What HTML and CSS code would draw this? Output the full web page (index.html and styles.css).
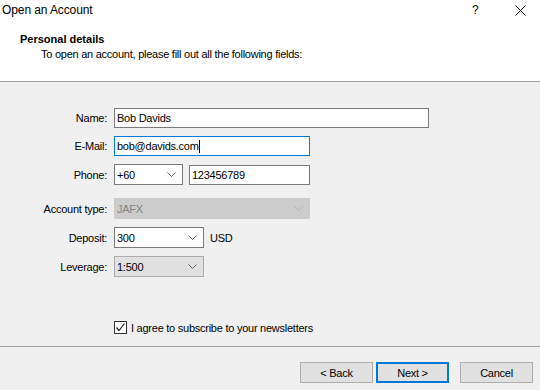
FILE: index.html
```html
<!doctype html>
<html lang="en">
  <head>
    <meta charset="UTF-8" />
    <meta name="viewport" content="width=device-width, initial-scale=1.0" />
    <title>Open an Account</title>
    <link rel="stylesheet" href="styles.css">
  </head>
  <body>
    <div class="dialog">
      <div class="header">
        <div class="titlebar">
          <span class="title">Open an Account</span>
          <span class="help">?</span>
          <span class="close">
            <svg width="11" height="11" viewBox="0 0 11 11">
              <path d="M0.5 0.5 L10.5 10.5 M10.5 0.5 L0.5 10.5" stroke="#000" stroke-width="1" fill="none" />
            </svg>
          </span>
        </div>
        <div class="intro">
          <h1>Personal details</h1>
          <p>To open an account, please fill out all the following fields:</p>
        </div>
      </div>

      <div class="body">
        <div class="form">
          <div class="row">
            <label>Name:</label>
            <div class="field name">Bob Davids</div>
          </div>
          <div class="row">
            <label>E-Mail:</label>
            <div class="field email focused">bob@davids.com<span class="caret"></span></div>
          </div>
          <div class="row">
            <label>Phone:</label>
            <div class="combo code">
              <span>+60</span>
              <svg class="chevron" width="9" height="5" viewBox="0 0 9 5"><path d="M0.5 0.5 L4.5 4.5 L8.5 0.5" stroke="#606060" fill="none" /></svg>
            </div>
            <div class="field phone">123456789</div>
          </div>
          <div class="row gap-big">
            <label>Account type:</label>
            <div class="combo disabled account">
              <span>JAFX</span>
              <svg class="chevron" width="9" height="5" viewBox="0 0 9 5"><path d="M0.5 0.5 L4.5 4.5 L8.5 0.5" stroke="#b4b4b4" fill="none" /></svg>
            </div>
          </div>
          <div class="row">
            <label>Deposit:</label>
            <div class="combo deposit">
              <span>300</span>
              <svg class="chevron" width="9" height="5" viewBox="0 0 9 5"><path d="M0.5 0.5 L4.5 4.5 L8.5 0.5" stroke="#606060" fill="none" /></svg>
            </div>
            <span class="unit">USD</span>
          </div>
          <div class="row">
            <label>Leverage:</label>
            <div class="combo list leverage">
              <span>1:500</span>
              <svg class="chevron" width="9" height="5" viewBox="0 0 9 5"><path d="M0.5 0.5 L4.5 4.5 L8.5 0.5" stroke="#606060" fill="none" /></svg>
            </div>
          </div>
        </div>

        <div class="agree">
          <span class="check">
            <svg width="11" height="11" viewBox="0 0 11 11"><path d="M1.5 5.5 L4 8.5 L9.5 1.5" stroke="#222" stroke-width="1.2" fill="none" /></svg>
          </span>
          <span>I agree to subscribe to your newsletters</span>
        </div>
      </div>

      <div class="footer">
        <button class="btn">&lt; Back</button>
        <button class="btn default">Next &gt;</button>
        <button class="btn cancel">Cancel</button>
      </div>
    </div>
  </body>
</html>
```

FILE: styles.css
```css
body {
  margin: 0;
  padding: 0;
  font-family: "Liberation Sans", Arial, sans-serif;
  font-size: 11px;
  letter-spacing: -0.25px;
  color: #000;
  background: #f0f0f0;
}
.dialog {
  width: 540px;
  height: 390px;
  overflow: hidden;
}
.header {
  height: 81px;
  background: #fff;
  border-bottom: 1px solid #a0a0a0;
}
.titlebar {
  display: flex;
  align-items: center;
  height: 20px;
}
.title {
  font-size: 12px;
  letter-spacing: -0.1px;
  padding-left: 2px;
  flex: 1;
}
.help {
  font-size: 12px;
  width: 12px;
  margin-right: 31px;
}
.close {
  display: flex;
  width: 11px;
  margin-right: 14px;
}
.intro {
  margin-top: 13px;
}
.intro h1 {
  margin: 0;
  padding-left: 20px;
  font-size: 11px;
  letter-spacing: 0;
  line-height: 13px;
  font-weight: bold;
}
.intro p {
  margin: 2px 0 0;
  padding-left: 41px;
  line-height: 13px;
}
.body {
  height: 265px;
  border-bottom: 1px solid #a0a0a0;
  padding-top: 26px;
  box-sizing: border-box;
}
.form {
  display: flex;
  flex-direction: column;
  gap: 8px;
}
.row {
  display: flex;
  align-items: center;
}
.row.gap-big {
  margin-top: 5px;
}
.row label {
  width: 107px;
  margin-right: 7px;
  text-align: right;
}
.field {
  height: 20px;
  box-sizing: border-box;
  border: 1px solid #7a7a7a;
  background: #fff;
  padding: 0 2px;
  display: flex;
  align-items: center;
}
.field.focused {
  border-color: #0078d7;
}
.caret {
  width: 1px;
  height: 13px;
  background: #000;
}
.name {
  width: 315px;
}
.email {
  width: 196px;
}
.phone {
  width: 121px;
  margin-left: 6px;
}
.combo {
  height: 21px;
  box-sizing: border-box;
  border: 1px solid #7a7a7a;
  background: #fff;
  padding: 0 6px 0 2px;
  display: flex;
  align-items: center;
  justify-content: space-between;
}
.combo.code {
  width: 69px;
}
.combo.account {
  width: 196px;
}
.combo.disabled {
  background: #cccccc;
  border-color: #cccccc;
  color: #838383;
}
.combo.deposit,
.combo.leverage {
  width: 90px;
}
.combo.list {
  background: #e1e1e1;
  border-color: #adadad;
}
.unit {
  margin-left: 6px;
}
.agree {
  display: flex;
  align-items: center;
  margin: 44px 0 0 114px;
  height: 13px;
}
.check {
  width: 13px;
  height: 13px;
  box-sizing: border-box;
  border: 1px solid #333;
  background: #fff;
  display: flex;
  align-items: center;
  justify-content: center;
  margin-right: 4px;
}
.footer {
  display: flex;
  justify-content: flex-end;
  padding: 15px 7px 0 0;
}
.btn {
  width: 73px;
  height: 21px;
  box-sizing: border-box;
  background: #e1e1e1;
  border: 1px solid #adadad;
  font-family: "Liberation Sans", Arial, sans-serif;
  font-size: 11px;
  letter-spacing: -0.25px;
  color: #000;
  padding: 0;
  margin-left: 3px;
}
.btn.default {
  border: 2px solid #0078d7;
}
.btn.cancel {
  margin-left: 11px;
}
```
